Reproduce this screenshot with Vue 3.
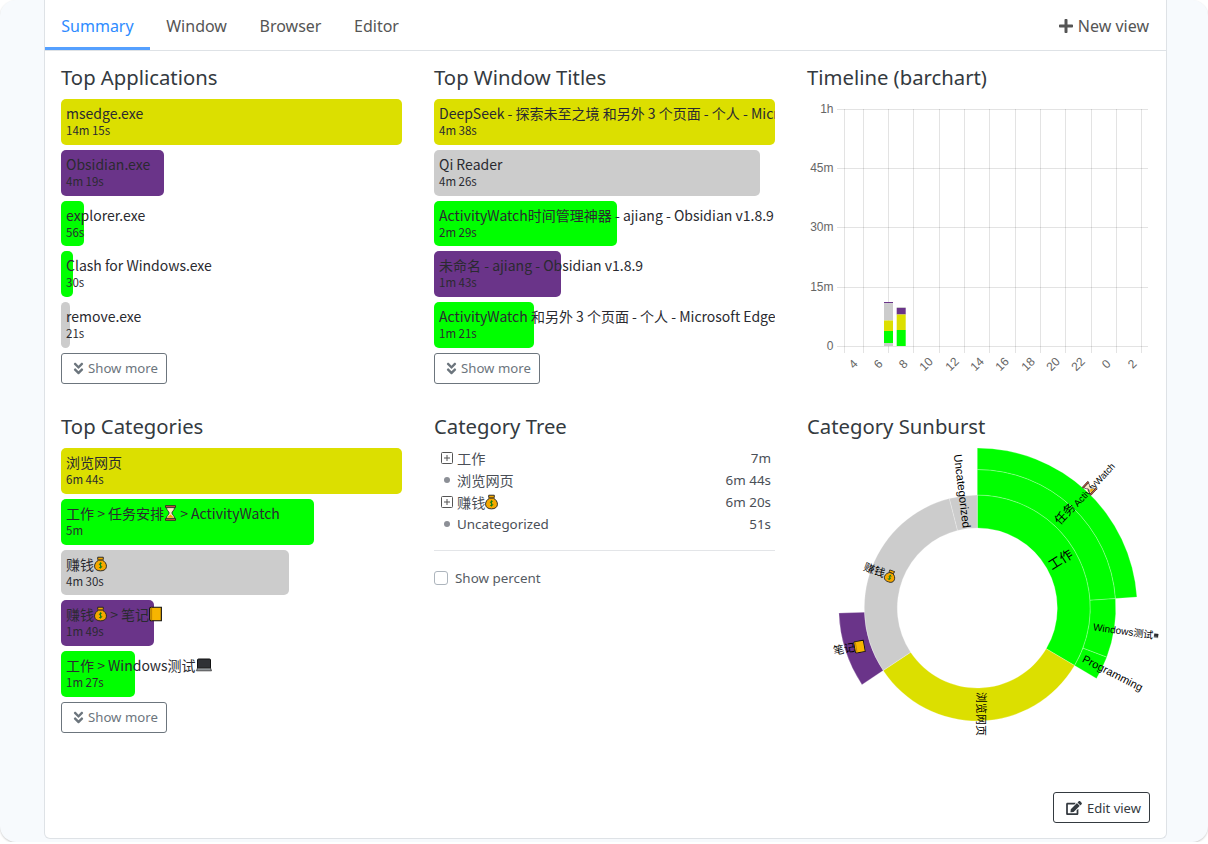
<template>
  <div class="page">
    <svg class="sprite" aria-hidden="true">
      <defs>
        <symbol id="ic-bag" viewBox="0 0 14 16">
          <path d="M4 .7h6v2.2l-1 1H5l-1-1z" fill="#f5a800" stroke="#222" stroke-width="1" />
          <path d="M5 3.800h4c2.600 1.400 4.400 3.800 4.400 6.600 0 3.200-2.600 5-6.400 5s-6.400-1.800-6.400-5c0-2.800 1.800-5.200 4.400-6.600z" fill="#f5a800" stroke="#222" stroke-width="1" />
          <path d="M8.600 7.600C8 7 6 7 5.800 8.300c-.2 1.400 2.700 1.200 2.600 2.700-.1 1.200-2.200 1.200-3 .5M7 6.200v6.600" fill="none" stroke="#0a7d16" stroke-width="1" />
        </symbol>
        <symbol id="ic-glass" viewBox="0 0 12 16">
          <path d="M1 .6h10v2H1zM1 13.400h10v2H1z" fill="#c8553d" stroke="#222" stroke-width=".8" />
          <path d="M2 2.600h8c0 2.800-2.600 3.800-2.600 5.400S10 10.600 10 13.400H2c0-2.800 2.600-3.800 2.600-5.400S2 5.400 2 2.600z" fill="#fde6c8" stroke="#222" stroke-width=".8" />
          <path d="M3 12.800c.8-1.800 2.400-2.600 3-3.200.6.600 2.200 1.400 3 3.200z" fill="#f5a800" />
        </symbol>
        <symbol id="ic-book" viewBox="0 0 14 16">
          <path d="M2.500.7h10.800v14.600H2.500A1.800 1.800 0 0 1 .7 13.500V2.500A1.800 1.800 0 0 1 2.500.7z" fill="#f7b500" stroke="#111" stroke-width="1.200" />
          <path d="M2.800 1v14" stroke="#b97f00" stroke-width="1" />
        </symbol>
        <symbol id="ic-laptop" viewBox="0 0 16 14">
          <path d="M2.500 1h11a1 1 0 0 1 1 1v8h-13V2a1 1 0 0 1 1-1z" fill="#2f3136" stroke="#111" stroke-width="1" />
          <path d="M1.500 10h13l1 2.800H.5z" fill="#8f9499" stroke="#333" stroke-width=".8" />
        </symbol>
        <symbol id="ic-chevrons" viewBox="0 0 320 512">
          <path fill="currentColor" d="M143 256.300L7 120.300c-9.400-9.400-9.400-24.600 0-33.900l22.600-22.600c9.400-9.400 24.600-9.400 33.900 0l96.400 96.400 96.400-96.400c9.400-9.400 24.600-9.400 33.900 0L313 86.300c9.400 9.400 9.400 24.600 0 33.900l-136 136c-9.400 9.500-24.600 9.500-34 .1zm34 192l136-136c9.400-9.400 9.400-24.600 0-33.900l-22.600-22.600c-9.400-9.400-24.600-9.400-33.900 0L160 352.100l-96.400-96.400c-9.400-9.400-24.600-9.400-33.900 0L7 278.300c-9.400 9.400-9.400 24.600 0 33.900l136 136c9.400 9.500 24.600 9.500 34 .1z" />
        </symbol>
      </defs>
    </svg>

    <main class="card">
      <nav class="tabs">
        <a v-for="tab in tabs" :key="tab" class="tab" :class="{ active: tab === 'Summary' }">{{ tab }}</a>
        <a class="new-view">
          <svg class="plus" viewBox="0 0 448 512"><path fill="currentColor" d="M416 208H272V64c0-17.670-14.330-32-32-32h-32c-17.670 0-32 14.330-32 32v144H32c-17.670 0-32 14.330-32 32v32c0 17.670 14.330 32 32 32h144v144c0 17.670 14.330 32 32 32h32c17.670 0 32-14.330 32-32V304h144c17.670 0 32-14.330 32-32v-32c0-17.670-14.330-32-32-32z" /></svg>
          New view
        </a>
      </nav>

      <div class="grid">
        <section v-for="list in lists" :key="list.title" class="panel">
          <h2>{{ list.title }}</h2>
          <div class="bars">
            <div v-for="row in list.rows" :key="row.name + row.time" class="bar-row">
              <div class="bar-fill" :style="{ width: row.width + 'px', background: row.color }"></div>
              <div class="bar-text">
                <div class="bar-name">
                  <template v-for="(part, i) in row.parts" :key="i">
                    <svg v-if="part.icon" class="emoji" :style="{ width: part.w + 'px' }"><use :href="'#ic-' + part.icon" /></svg>
                    <span v-else>{{ part.text }}</span>
                  </template>
                </div>
                <div class="bar-time">{{ row.time }}</div>
              </div>
            </div>
          </div>
          <button class="more">
            <svg class="chev"><use href="#ic-chevrons" /></svg>
            Show more
          </button>
        </section>

        <section class="panel timeline">
          <h2>Timeline (barchart)</h2>
          <svg class="chart" viewBox="0 0 341 290">
            <g stroke="rgba(0,0,0,.11)" stroke-width="1">
              <line v-for="y in hLines" :key="'h' + y" x1="30" x2="341" :y1="y" :y2="y" />
              <line v-for="x in vLines" :key="'v' + x" :x1="x" :x2="x" y1="10" y2="254" />
            </g>
            <rect v-for="(s, i) in segments" :key="i" :x="s.x" :y="s.y" width="9" :height="s.h" :fill="s.c" />
            <text v-for="l in yLabels" :key="l.t" class="tick" x="26.5" :y="l.y" text-anchor="end">{{ l.t }}</text>
            <text
              v-for="l in xLabels"
              :key="l.t"
              class="tick"
              text-anchor="middle"
              :transform="`translate(${l.x} 268) rotate(-45)`"
            >{{ l.t }}</text>
          </svg>
        </section>

        <section class="panel tree-panel">
          <h2>Category Tree</h2>
          <div class="tree">
            <div v-for="node in tree" :key="node.name" class="tree-row">
              <svg v-if="node.open" class="box" viewBox="0 0 12 12">
                <rect x=".5" y=".5" width="11" height="11" rx="1" fill="none" stroke="#555" />
                <path d="M3 6h6M6 3v6" stroke="#555" />
              </svg>
              <span v-else class="dot"></span>
              <span class="tree-name" :class="{ cjk: node.cjk }">{{ node.name }}<svg v-if="node.icon" class="emoji"><use :href="'#ic-' + node.icon" /></svg></span>
              <span class="tree-time">{{ node.time }}</span>
            </div>
          </div>
          <hr />
          <label class="check"><span class="checkbox"></span>Show percent</label>
        </section>

        <section class="panel sun">
          <h2>Category Sunburst</h2>
          <svg class="sunburst" viewBox="0 0 360 300">
            <path v-for="a in arcs" :key="a.key" :d="a.d" :fill="a.c" stroke="#fff" stroke-opacity=".5" stroke-width=".5" />
            <g v-for="(l, i) in sunLabels" :key="i" :transform="`translate(${l.x} ${l.y}) rotate(${l.r})`">
              <text v-if="l.t" class="sun-label" :style="{ fontSize: l.s + 'px' }" :x="-l.w / 2" y="4">{{ l.t }}</text>
              <use v-if="l.icon" :href="'#ic-' + l.icon" :x="l.w / 2 - l.iw" y="-6" :width="l.iw" height="13" />
            </g>
          </svg>
        </section>
      </div>

      <div class="foot">
        <button class="edit">
          <svg class="edit-icon" viewBox="0 0 576 512">
            <path fill="currentColor" d="M402.600 83.200l90.200 90.200c3.800 3.800 3.800 10 0 13.800L274.400 405.600l-92.800 10.300c-12.400 1.400-22.900-9.100-21.500-21.500l10.300-92.800L388.800 83.200c3.800-3.800 10-3.800 13.800 0zm162-22.900l-48.800-48.800c-15.200-15.200-39.900-15.200-55.200 0l-35.400 35.400c-3.800 3.800-3.800 10 0 13.800l90.200 90.200c3.800 3.800 10 3.800 13.800 0l35.400-35.400c15.200-15.300 15.200-40 0-55.200zM384 346.200V448H64V128h229.800c3.200 0 6.200-1.300 8.500-3.500l40-40c7.600-7.600 2.200-20.500-8.500-20.500H48C21.500 64 0 85.500 0 112v352c0 26.500 21.500 48 48 48h352c26.500 0 48-21.500 48-48V306.200c0-10.700-12.900-16-20.500-8.500l-40 40c-2.200 2.300-3.500 5.300-3.500 8.500z" />
          </svg>
          Edit view
        </button>
      </div>
    </main>
  </div>
</template>

<script setup>
const YELLOW = "#dcdf00";
const PURPLE = "#6a3489";
const GREEN = "#00ff00";
const GRAY = "#cccccc";

const tabs = ["Summary", "Window", "Browser", "Editor"];

const txt = (text) => ({ text });
const bag = { icon: "bag", w: 13 };

const lists = [
  {
    title: "Top Applications",
    rows: [
      { name: "msedge.exe", parts: [txt("msedge.exe")], time: "14m 15s", width: 341, color: YELLOW },
      { name: "Obsidian.exe", parts: [txt("Obsidian.exe")], time: "4m 19s", width: 103, color: PURPLE },
      { name: "explorer.exe", parts: [txt("explorer.exe")], time: "56s", width: 23, color: GREEN },
      { name: "Clash for Windows.exe", parts: [txt("Clash for Windows.exe")], time: "30s", width: 12, color: GREEN },
      { name: "remove.exe", parts: [txt("remove.exe")], time: "21s", width: 9, color: GRAY },
    ],
  },
  {
    title: "Top Window Titles",
    rows: [
      { name: "deepseek", parts: [txt("DeepSeek - 探索未至之境 和另外 3 个页面 - 个人 - Microsoft Edge")], time: "4m 38s", width: 341, color: YELLOW },
      { name: "qi", parts: [txt("Qi Reader")], time: "4m 26s", width: 326, color: GRAY },
      { name: "aw", parts: [txt("ActivityWatch时间管理神器 - ajiang - Obsidian v1.8.9")], time: "2m 29s", width: 183, color: GREEN },
      { name: "untitled", parts: [txt("未命名 - ajiang - Obsidian v1.8.9")], time: "1m 43s", width: 127, color: PURPLE },
      { name: "aw2", parts: [txt("ActivityWatch 和另外 3 个页面 - 个人 - Microsoft Edge")], time: "1m 21s", width: 100, color: GREEN },
    ],
  },
  {
    title: "Top Categories",
    rows: [
      { name: "browse", parts: [txt("浏览网页")], time: "6m 44s", width: 341, color: YELLOW },
      { name: "task", parts: [txt("工作 > 任务安排"), { icon: "glass", w: 13 }, txt(" > ActivityWatch")], time: "5m", width: 253, color: GREEN },
      { name: "money", parts: [txt("赚钱"), bag], time: "4m 30s", width: 228, color: GRAY },
      { name: "notes", parts: [txt("赚钱"), bag, txt(" > 笔记"), { icon: "book", w: 13 }], time: "1m 49s", width: 93, color: PURPLE },
      { name: "win", parts: [txt("工作 > Windows测试"), { icon: "laptop", w: 16 }], time: "1m 27s", width: 74, color: GREEN },
    ],
  },
];

const hLines = [10.5, 69.5, 128.5, 188.5, 247.5];
const vLines = [37.5, 56.5, 81.5, 106.5, 132.5, 157.5, 182.5, 208.5, 233.5, 258.5, 284.5, 309.5, 334.5];
const yLabels = [
  { t: "1h", y: 14 },
  { t: "45m", y: 73 },
  { t: "30m", y: 132 },
  { t: "15m", y: 192 },
  { t: "0", y: 251 },
];
const xLabels = ["4", "6", "8", "10", "12", "14", "16", "18", "20", "22", "0", "2"].map((t, i) => ({
  t,
  x: [49, 74, 99, 122, 148, 173, 198, 224, 249, 274, 302, 328][i],
}));
const segments = [
  { x: 77, y: 203, h: 1.2, c: PURPLE },
  { x: 77, y: 204.2, h: 17.3, c: GRAY },
  { x: 77, y: 221.5, h: 10.5, c: YELLOW },
  { x: 77, y: 232, h: 12, c: GREEN },
  { x: 77, y: 244, h: 3, c: GRAY },
  { x: 89.7, y: 208, h: 1, c: GRAY },
  { x: 89.7, y: 209, h: 6.5, c: PURPLE },
  { x: 89.7, y: 215.5, h: 15.5, c: YELLOW },
  { x: 89.7, y: 231, h: 16, c: GREEN },
];

const tree = [
  { name: "工作", time: "7m", open: true, cjk: true },
  { name: "浏览网页", time: "6m 44s", cjk: true },
  { name: "赚钱", time: "6m 20s", open: true, icon: "bag", cjk: true },
  { name: "Uncategorized", time: "51s" },
];

// sunburst centre, in the svg's own coordinates
const CX = 170.3;
const CY = 160;

const point = (r, deg) => {
  const a = (deg * Math.PI) / 180;
  return `${(CX + r * Math.sin(a)).toFixed(2)} ${(CY - r * Math.cos(a)).toFixed(2)}`;
};

const arcPath = (r0, r1, a0, a1) => {
  const large = a1 - a0 > 180 ? 1 : 0;
  return `M${point(r0, a0)}A${r0} ${r0} 0 ${large} 1 ${point(r0, a1)}L${point(r1, a1)}A${r1} ${r1} 0 ${large} 0 ${point(r1, a0)}Z`;
};

const arcs = [
  [80, 113, 0, 120.6, GREEN],
  [80, 113, 120.6, 236.4, YELLOW],
  [80, 113, 236.4, 345.7, GRAY],
  [80, 113, 345.7, 360, GRAY],
  [113, 138.5, 0, 86.1, GREEN],
  [113, 138.5, 86.1, 110.8, GREEN],
  [113, 138.5, 110.8, 120.6, GREEN],
  [113, 138.5, 236.4, 267.9, PURPLE],
  [138.5, 160, 0, 86.1, GREEN],
].map(([r0, r1, a0, a1, c], key) => ({ key, d: arcPath(r0, r1, a0, a1), c }));

// the svg starts at x 808, y 448 of the page
const sunLabels = [
  { t: "工作", x: 254, y: 112, r: -32, s: 13, w: 26 },
  { t: "任务", x: 258, y: 66, r: -47, s: 12, w: 24 },
  { t: "ActivityWatch", x: 287, y: 36, r: -47, s: 9.3, w: 56 },
  { icon: "glass", iw: 10, x: 282, y: 40, r: -47, w: 10 },
  { t: "Windows测试", x: 319, y: 183, r: 8, s: 10, w: 66, icon: "laptop", iw: 5 },
  { t: "Programming", x: 304, y: 224, r: 27, s: 11, w: 62 },
  { t: "浏览网页", x: 174, y: 266, r: 90, s: 11, w: 44 },
  { t: "赚钱", x: 73, y: 124, r: 20, s: 11, w: 34, icon: "bag", iw: 12 },
  { t: "笔记", x: 42, y: 200, r: -10, s: 11, w: 32, icon: "book", iw: 11 },
  { t: "Uncategorized", x: 155, y: 41, r: 83, s: 11.5, w: 70 },
];
</script>

<style>
html,
body {
  margin: 0;
  background: #fff;
}
</style>

<style scoped>
.page {
  height: 842px;
  box-sizing: border-box;
  padding: 0 41px 3px 44px;
  background: #f7fafd;
  border-radius: 16px;
  box-shadow: 0 1px 2px rgba(0, 0, 0, 0.2);
  overflow: hidden;
  font-family: "Noto Sans", sans-serif;
  color: #343a40;
}

.sprite {
  position: absolute;
  width: 0;
  height: 0;
}

.card {
  height: 839px;
  box-sizing: border-box;
  display: flex;
  flex-direction: column;
  background: #fff;
  border: 1px solid #dee2e6;
  border-top: 0;
  border-radius: 0 0 6px 6px;
}

.tabs {
  display: flex;
  height: 51px;
  flex: none;
  box-sizing: border-box;
  border-bottom: 1px solid #dee2e6;
}

.tab {
  padding: 0 16.3px;
  line-height: 53px;
  font-size: 16px;
  color: #555;
  border-bottom: 3px solid transparent;
  height: 50px;
  box-sizing: border-box;
}

.tab.active {
  color: #2e8bff;
  border-bottom-color: #55a0ff;
}

.new-view {
  margin-left: auto;
  margin-right: 17px;
  padding-top: 1px;
  display: flex;
  align-items: center;
  gap: 5px;
  font-size: 16px;
  color: #555;
}

.plus {
  width: 14px;
  height: 16px;
}

.grid {
  padding: 14px 16px 0;
  display: grid;
  grid-template-columns: repeat(3, 1fr);
  grid-template-rows: 336px auto;
  column-gap: 32px;
  row-gap: 13px;
}

.panel:nth-child(3) {
  grid-column: 1;
  grid-row: 2;
}

.timeline {
  grid-column: 3;
  grid-row: 1;
}

.tree-panel {
  grid-column: 2;
  grid-row: 2;
}

.sun {
  grid-column: 3;
  grid-row: 2;
}

h2 {
  margin: 0 0 10px;
  font-size: 20.3px;
  font-weight: 400;
  line-height: 24px;
  color: #343a40;
}

.bars {
  display: flex;
  flex-direction: column;
  gap: 5px;
}

.bar-row {
  position: relative;
  height: 45.8px;
  overflow: hidden;
}

.bar-fill {
  height: 100%;
  border-radius: 5px;
}

.bar-text {
  position: absolute;
  top: 0;
  left: 0;
  right: 0;
  padding: 5px 5px;
  color: #2a2a30;
  font-family: "Noto Sans CJK SC", sans-serif;
  white-space: nowrap;
}

.bar-name {
  height: 18px;
  line-height: 18px;
  font-size: 14px;
  display: flex;
  align-items: center;
  white-space: pre;
}

.bar-time {
  line-height: 16px;
  font-size: 11.5px;
}

.emoji {
  width: 13px;
  height: 16px;
  flex: none;
}

.more {
  margin-top: 5px;
  width: 106px;
  height: 31px;
  display: flex;
  align-items: center;
  gap: 4px;
  padding: 0 0 0 11px;
  background: #fff;
  border: 1px solid #6c757d;
  border-radius: 3px;
  color: #6c757d;
  font-family: inherit;
  font-size: 13.2px;
}

.chev {
  width: 11px;
  height: 15px;
}

.chart {
  display: block;
  width: 341px;
  height: 290px;
}

.tick {
  font-family: "Liberation Sans", sans-serif;
  font-size: 12px;
  fill: #666;
}

.tree {
  margin-top: -1px;
  padding: 0 4px 0 7px;
}

.tree-row {
  display: flex;
  align-items: center;
  height: 22px;
  font-size: 13.4px;
  color: #4a4f57;
  font-family: "Noto Sans", "Noto Sans CJK SC", sans-serif;
}

.box {
  width: 12px;
  height: 12px;
  flex: none;
}

.dot {
  width: 6px;
  height: 6px;
  margin: 0 3px;
  flex: none;
  border-radius: 50%;
  background: #8c8f96;
}

.tree-name {
  margin-left: 4px;
  display: flex;
  align-items: center;
}

.tree-name.cjk {
  font-size: 14.2px;
}

.tree-time {
  margin-left: auto;
}

hr {
  margin: 15px 0 0;
  border: 0;
  border-top: 1px solid #e3e5e8;
}

.check {
  margin-top: 18px;
  display: flex;
  align-items: center;
  gap: 7px;
  font-size: 13.4px;
  color: #555b63;
}

.checkbox {
  width: 12px;
  height: 12px;
  border: 1px solid #adb5bd;
  border-radius: 3px;
  background: #fff;
}

.sunburst {
  display: block;
  width: 360px;
  height: 300px;
  overflow: visible;
}

.sun-label {
  font-family: "Liberation Sans", "Noto Sans CJK SC", sans-serif;
  fill: #000;
}

.foot {
  margin-top: auto;
  padding: 0 16px 15px;
  display: flex;
  justify-content: flex-end;
}

.edit {
  width: 97px;
  height: 31px;
  display: flex;
  align-items: center;
  gap: 5px;
  padding: 0 0 0 12px;
  background: #fff;
  border: 1px solid #343a40;
  border-radius: 3px;
  color: #343a40;
  font-family: inherit;
  font-size: 13px;
}

.edit-icon {
  width: 16px;
  height: 14px;
}
</style>
